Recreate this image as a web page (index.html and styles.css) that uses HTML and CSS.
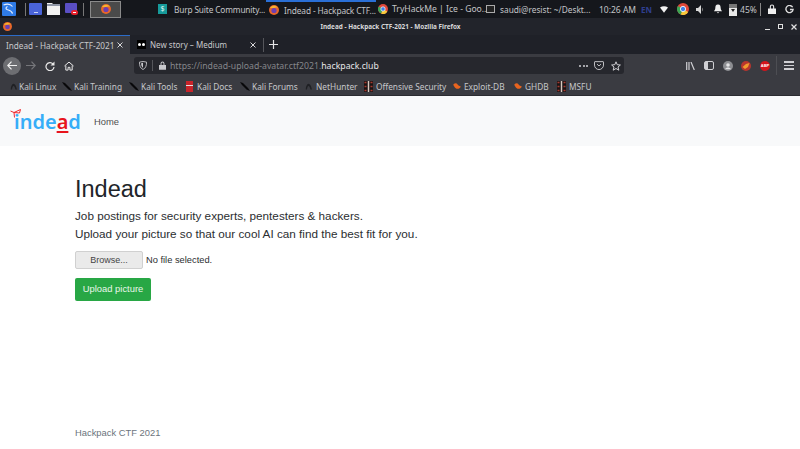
FILE: index.html
```html
<!DOCTYPE html>
<html lang="en">
<head>
  <meta charset="UTF-8" />
  <title>Indead - Hackpack CTF-2021</title>
  <link rel="stylesheet" href="styles.css">
</head>
<body>
  <svg class="defs" width="0" height="0">
    <symbol id="firefox" viewBox="0 0 10 10">
      <circle cx="5" cy="5" r="5" fill="#e8672a"/>
      <circle cx="5" cy="5.5" r="2.6" fill="#6d3fb0"/>
      <path d="M1 3c2-3 6-3 8 0-2-1-3 0-4 0z" fill="#f6b52d"/>
    </symbol>
    <symbol id="chrome" viewBox="0 0 10 10">
      <circle cx="5" cy="5" r="5" fill="#e0483a"/>
      <path d="M5 5 9.3 7.5A5 5 0 0 1 3 9.6z" fill="#f7c93a"/>
      <path d="M5 5 3 9.6A5 5 0 0 1 .7 2.5z" fill="#3aa655"/>
      <circle cx="5" cy="5" r="2.2" fill="#3f7fe8" stroke="#fff" stroke-width=".7"/>
    </symbol>
    <symbol id="dragon" viewBox="0 0 10 9">
      <path d="M0 0 3 1 8 6 10 9 6.500 7.500 2 3z" fill="#08080a"/>
    </symbol>
    <symbol id="hunter" viewBox="0 0 9 9">
      <path d="M1 8.500C1 5 2.500 1 4.500 1S8 4 9 8.500H7C6.500 6 5.500 4 4.500 4S3 6 2.500 8.500z" fill="#1f2024"/>
    </symbol>
    <symbol id="offsec" viewBox="0 0 9 11">
      <rect width="9" height="11" fill="#1b1414"/>
      <path d="M4.500 0v11" stroke="#d9c9c0" stroke-width="1.500"/>
      <path d="M.5 1.500h2M6.500 1.500h2M.5 5.500h2M6.500 5.500h2M.5 9.500h2M6.500 9.500h2" stroke="#a8392f" stroke-width="1.500"/>
    </symbol>
    <symbol id="flame" viewBox="0 0 9 7">
      <path d="M0 2C2 0 4 0 5 1.500S8 4 9 4C8 6.500 5 7.500 3 6S1 3 0 2z" fill="#e8641f"/>
    </symbol>
  </svg>

  <div class="panel">
    <svg class="kali-menu" width="14" height="14" viewBox="0 0 14 14">
      <rect width="14" height="14" rx="1" fill="#2f7be6"/>
      <path d="M1.500 3c3.500-1.500 7-1 9 1.500M5.500 4.500c-2 1-2 2.500 0 3.200 2.500.8 4.500 1 5 4" fill="none" stroke="#e8eefb" stroke-width="1.200"/>
    </svg>
    <span class="sep sep-a"></span>
    <svg class="launcher" width="13" height="12" viewBox="0 0 13 12">
      <rect width="13" height="12" rx="1" fill="#4a64d8"/>
      <rect x="5" y="9" width="4" height="1" fill="#cdd6f5"/>
    </svg>
    <svg class="launcher" width="13" height="12" viewBox="0 0 13 12">
      <path d="M0 1V0h5l1 1h7v11H0z" fill="#f1f1f1"/>
      <rect y="1" width="13" height="2" fill="#8f96a6"/>
    </svg>
    <svg class="launcher launcher-last" width="13" height="12" viewBox="0 0 13 12">
      <rect width="12" height="10" rx="1" fill="#5a4fc4"/>
      <rect x="6" y="7" width="7" height="5" rx="2.500" fill="#e8202c"/>
      <rect x="8" y="9" width="3" height="1" fill="#fff"/>
    </svg>
    <span class="sep sep-b"></span>
    <div class="active-win">
      <svg width="10" height="10"><use href="#firefox"/></svg>
    </div>
    <div class="task task-burp">
      <span class="burp-icon">$</span>
      <span class="task-label">Burp Suite Community...</span>
    </div>
    <div class="task task-ff">
      <svg width="10" height="10"><use href="#firefox"/></svg>
      <span class="task-label">Indead - Hackpack CTF...</span>
    </div>
    <div class="task task-chrome">
      <svg width="10" height="10"><use href="#chrome"/></svg>
      <span class="task-label">TryHackMe | Ice - Goo...</span>
    </div>
    <div class="task task-term">
      <span class="term-icon"></span>
      <span class="task-label">saudi@resist: ~/Deskt...</span>
    </div>
    <span class="clock">10:26 AM</span>
    <span class="lang">EN</span>
    <svg class="tray-wifi" width="8" height="7" viewBox="0 0 10 8"><path d="M0 1.500C3-.5 7-.5 10 1.500L5 8z" fill="#f2f2f2"/></svg>
    <svg class="tray-chrome" width="12" height="12"><use href="#chrome"/></svg>
    <svg class="tray-vol" width="9" height="9" viewBox="0 0 9 9"><path d="M0 3h2l3-3v9L2 6H0z" fill="#d8d8d8"/><path d="M6 2.500c1.500 1 1.500 3 0 4z" fill="#777"/></svg>
    <svg class="tray-bell" width="8" height="10" viewBox="0 0 9 10"><path d="M4.500 0C7 0 7.500 2 7.500 4c0 2 1.500 3.500 1.500 3.500H0S1.500 6 1.500 4c0-2 .5-4 3-4zM3.500 8.500h2l-1 1.500z" fill="#efefef"/></svg>
    <svg class="tray-batt" width="8" height="13" viewBox="0 0 8 13"><rect y="1" width="8" height="12" fill="#e8e8e8"/><rect y="1" width="8" height="4" fill="#777"/><path d="M2 6h4L4 9z" fill="#222"/></svg>
    <span class="batt-pct">45%</span>
    <span class="sep sep-c"></span>
    <svg class="tray-lock" width="8" height="10" viewBox="0 0 9 11"><path d="M2 5V3a2.500 2.500 0 0 1 5 0v2h2v6H0V5zM3.200 5h2.600V3a1.300 1.300 0 0 0-2.600 0z" fill="#efefef"/></svg>
    <svg class="tray-power" width="9" height="9" viewBox="0 0 10 10"><path d="M8.500 2.500A4 4 0 1 0 9 5H5.500" fill="none" stroke="#dcdcdc" stroke-width="1.500"/></svg>
  </div>

  <div class="titlebar">
    <svg class="title-icon" width="9" height="9"><use href="#firefox"/></svg>
    <span class="title-text">Indead - Hackpack CTF-2021 - Mozilla Firefox</span>
    <div class="win-btns">
      <span class="win-min"></span>
      <span class="win-max"></span>
      <svg width="6" height="6" viewBox="0 0 6 6"><path d="M.5.5l5 5M5.500.5l-5 5" stroke="#e0e0e0" stroke-width="1.200"/></svg>
    </div>
  </div>

  <div class="tabstrip">
    <div class="tab tab-active">
      <span class="tab-label">Indead - Hackpack CTF-2021</span>
      <svg class="tab-x" width="6" height="6" viewBox="0 0 6 6"><path d="M.5.5l5 5M5.500.5l-5 5" stroke="#d8d8da" stroke-width="1"/></svg>
    </div>
    <div class="tab tab-idle">
      <span class="medium-icon"><i></i><i></i></span>
      <span class="tab-label">New story – Medium</span>
      <svg class="tab-x" width="6" height="6" viewBox="0 0 6 6"><path d="M.5.5l5 5M5.500.5l-5 5" stroke="#d8d8da" stroke-width="1"/></svg>
    </div>
    <span class="tab-sep"></span>
    <svg class="tab-new" width="9" height="9" viewBox="0 0 9 9"><path d="M4.500 0v9M0 4.500h9" stroke="#e4e4e6" stroke-width="1.200"/></svg>
  </div>

  <div class="toolbar">
    <span class="nav-back">
      <svg width="10" height="9" viewBox="0 0 10 9"><path d="M4.500.7.800 4.500 4.500 8.300M1 4.500h9" fill="none" stroke="#f0f0f0" stroke-width="1.200"/></svg>
    </span>
    <svg class="nav-fwd" width="10" height="9" viewBox="0 0 10 9"><path d="M5.500.7 9.200 4.500 5.500 8.300M9 4.500H0" fill="none" stroke="#75767a" stroke-width="1.200"/></svg>
    <svg class="nav-reload" width="10" height="10" viewBox="0 0 10 10"><path d="M8 3A4 4 0 1 0 9 6" fill="none" stroke="#e8e8e8" stroke-width="1.200"/><path d="M9.500.5v4h-4z" fill="#e8e8e8"/></svg>
    <svg class="nav-home" width="10" height="10" viewBox="0 0 11 10"><path d="M.5 5 5.500.7 10.500 5M2 4.500V9.500h2.500V6.500h2V9.500H9V4.500" fill="none" stroke="#e8e8e8" stroke-width="1.100"/></svg>
    <div class="urlbar">
      <svg class="url-shield" width="8" height="9" viewBox="0 0 9 10"><path d="M.5 1.200 4.500.5l4 .7c0 4-1 7-4 8.300-3-1.300-4-4.300-4-8.300z" fill="none" stroke="#c8c8cc"/><path d="M4.500 2v5.500C3 6.700 2.500 5 2.400 2.500z" fill="#c8c8cc"/></svg>
      <span class="url-div"></span>
      <svg class="url-lock" width="7" height="9" viewBox="0 0 9 11"><path d="M2 5V3a2.500 2.500 0 0 1 5 0v2h2v6H0V5zM3.200 5h2.600V3a1.300 1.300 0 0 0-2.600 0z" fill="#c8c8cc"/></svg>
      <span class="url-text">https://indead-upload-avatar.ctf2021.<span class="url-host">hackpack.club</span></span>
      <span class="url-dots"><i></i><i></i><i></i></span>
      <svg class="url-pocket" width="10" height="9" viewBox="0 0 11 10"><path d="M1 .7h9a.5.5 0 0 1 .5.500V4.500a5 5 0 0 1-10 0V1.200A.5.5 0 0 1 1 .7z" fill="none" stroke="#d0d0d4"/><path d="M3.300 3.500 5.500 5.500 7.700 3.500" fill="none" stroke="#d0d0d4"/></svg>
      <svg class="url-star" width="10" height="10" viewBox="0 0 10 10"><path d="M5 .8 6.200 3.700 9.400 4 7 6 7.800 9.200 5 7.500 2.200 9.200 3 6 .6 4 3.800 3.700z" fill="none" stroke="#d0d0d4"/></svg>
    </div>
    <svg class="tb-lib" width="9" height="8" viewBox="0 0 9 8"><path d="M.7 0v8M3 0v8M5 0l3.300 8" fill="none" stroke="#cfcfd3" stroke-width="1.200"/></svg>
    <svg class="tb-side" width="10" height="9" viewBox="0 0 10 9"><rect x=".5" y=".5" width="9" height="8" rx="1.500" fill="none" stroke="#cfcfd3"/><rect x="1" y="1" width="3" height="7" fill="#cfcfd3"/></svg>
    <svg class="tb-acct" width="10" height="10" viewBox="0 0 10 10"><circle cx="5" cy="5" r="5" fill="#8d8e92"/><circle cx="5" cy="4" r="1.800" fill="#e4e4e6"/><path d="M2 8.200c1-2.200 5-2.200 6 0z" fill="#e4e4e6"/></svg>
    <svg class="tb-ext" width="10" height="10" viewBox="0 0 10 10"><circle cx="5" cy="5" r="5" fill="#b8352e"/><path d="M1.500 6 5 3l3.500-1L7 6 4 8z" fill="#f09a2e"/></svg>
    <span class="tb-abp">ABP</span>
    <span class="tb-sep"></span>
    <span class="tb-menu"><i></i><i></i><i></i></span>
  </div>

  <div class="bookmarks">
    <span class="bm bm-linux"><svg width="7" height="7"><use href="#hunter"/></svg>Kali Linux</span>
    <span class="bm bm-training"><svg width="10" height="9"><use href="#dragon"/></svg>Kali Training</span>
    <span class="bm bm-tools"><svg width="10" height="9"><use href="#dragon"/></svg>Kali Tools</span>
    <span class="bm bm-docs"><span class="bm-doc"></span>Kali Docs</span>
    <span class="bm bm-forums"><svg width="10" height="9"><use href="#dragon"/></svg>Kali Forums</span>
    <span class="bm bm-hunter"><svg width="7" height="7"><use href="#hunter"/></svg>NetHunter</span>
    <span class="bm bm-offsec"><svg width="9" height="11"><use href="#offsec"/></svg>Offensive Security</span>
    <span class="bm bm-edb"><svg width="8" height="6"><use href="#flame"/></svg>Exploit-DB</span>
    <span class="bm bm-ghdb"><svg width="8" height="6"><use href="#flame"/></svg>GHDB</span>
    <span class="bm bm-msfu"><svg width="9" height="11"><use href="#offsec"/></svg>MSFU</span>
  </div>

  <nav class="site-nav">
    <div class="logo">
      <svg class="logo-mark" width="12" height="10" viewBox="0 0 12 10"><path d="M.5 2 4 3.500 10.500.5 9.500 4 4 3.500 4.500 8.500" fill="none" stroke="#f0282d"/></svg>
      <span class="logo-text">inde<span class="logo-a">a</span>d</span>
    </div>
    <span class="nav-link">Home</span>
  </nav>

  <main class="content">
    <h1>Indead</h1>
    <p class="lead">Job postings for security experts, pentesters &amp; hackers.</p>
    <p class="lead">Upload your picture so that our cool AI can find the best fit for you.</p>
    <div class="file-row">
      <span class="browse">Browse...</span>
      <span class="file-name">No file selected.</span>
    </div>
    <span class="upload-btn">Upload picture</span>
  </main>

  <footer class="site-foot">Hackpack CTF 2021</footer>
</body>
</html>
```

FILE: styles.css
```css
* {
  box-sizing: border-box;
}

body {
  margin: 0;
  display: flex;
  flex-direction: column;
  height: 449px;
  overflow: hidden;
  background: #fff;
  font-family: "Liberation Sans", Arial, sans-serif;
  color: #212529;
}

svg {
  display: block;
  flex: none;
}

.defs {
  position: absolute;
}

/* desktop panel */
.panel {
  display: flex;
  align-items: center;
  flex: none;
  height: 18px;
  background: #15171c;
  color: #c4c5c8;
  font-family: "Noto Sans", sans-serif;
  font-size: 8.5px;
  white-space: nowrap;
}

.kali-menu { margin-left: 2px; }
.sep { width: 1px; height: 13px; background: #777; flex: none; }
.sep-a { margin: 0 3px 0 9px; }
.sep-b { margin: 0 6px 0 5px; }
.sep-c { margin: 0 7px 0 3px; background: #888; }
.launcher { margin-right: 5px; }
.launcher-last { margin-right: 0; }

.active-win {
  display: flex;
  align-items: center;
  justify-content: center;
  width: 31px;
  height: 17px;
  background: #4a4a4a;
  border: 1px solid #8a8a8a;
}

.task {
  display: flex;
  align-items: center;
  gap: 4px;
  flex: none;
  height: 18px;
}

.task-burp { width: 108px; margin-left: 37px; gap: 7px; font-size: 8.3px; letter-spacing: -.15px; }
.task-ff { width: 110px; padding-left: 3px; gap: 5px; border-top: 2px solid #2a6fd6; font-size: 8.3px; letter-spacing: -.1px; }
.task-chrome { width: 110px; padding-left: 2px; font-size: 8.6px; }
.task-term { width: 113px; gap: 5px; font-size: 8.3px; }

.burp-icon {
  flex: none;
  width: 9px;
  height: 10px;
  background: #169a9a;
  color: #e8f5f5;
  font-size: 7px;
  line-height: 10px;
  text-align: center;
}

.term-icon {
  flex: none;
  width: 9px;
  height: 8px;
  background: #222;
  border: 1px solid #aaa;
}

.clock { margin-left: 0; }
.lang { margin-left: 5px; color: #2f3f8f; font-size: 8px; font-weight: 700; }
.tray-wifi { margin-left: 8px; }
.tray-chrome { margin-left: 9px; }
.tray-vol { margin-left: 7px; }
.tray-bell { margin-left: 9px; }
.tray-batt { margin-left: 7px; }
.batt-pct { margin-left: 3px; }
.tray-power { margin-left: 9px; }

/* window title */
.titlebar {
  display: flex;
  align-items: center;
  flex: none;
  height: 17px;
  padding: 0 3px;
  background: #22242b;
}

.title-text {
  flex: 1;
  padding-left: 4px;
  text-align: center;
  color: #d8d8da;
  font-family: "Noto Sans", sans-serif;
  font-size: 6.4px;
  font-weight: 700;
}

.win-btns {
  display: flex;
  align-items: center;
  gap: 8px;
  width: 32px;
}

.win-min { width: 5px; height: 1px; margin-top: 5px; background: #e0e0e0; }
.win-max { width: 5px; height: 5px; border: 1px solid #e0e0e0; }

/* tabs */
.tabstrip {
  display: flex;
  align-items: stretch;
  flex: none;
  height: 19px;
  background: #1f2128;
  color: #c8c9cc;
  font-family: "Noto Sans", sans-serif;
  font-size: 8.2px;
  white-space: nowrap;
}

.tab {
  display: flex;
  align-items: center;
  flex: none;
}

.tab-active {
  justify-content: space-between;
  width: 130px;
  padding: 0 7px 0 6px;
  background: #3a3b41;
  border-top: 1px solid #2c6cc8;
}

.tab-idle {
  width: 133px;
  padding: 0 7px;
  font-size: 8px;
}

.tab-idle .tab-x { margin-left: auto; }

.medium-icon {
  display: flex;
  align-items: center;
  justify-content: center;
  gap: 1px;
  width: 9px;
  height: 9px;
  margin-right: 4px;
  background: #000;
}

.medium-icon i {
  width: 3px;
  height: 3px;
  border-radius: 50%;
  background: #fff;
}

.tab-sep { width: 1px; height: 14px; margin-top: 3px; background: #55565b; }
.tab-new { margin: 5px 0 0 5px; }

/* nav toolbar */
.toolbar {
  display: flex;
  align-items: center;
  flex: none;
  height: 23px;
  background: #3a3b41;
}

.nav-back {
  display: flex;
  align-items: center;
  justify-content: center;
  width: 18px;
  height: 18px;
  margin-left: 3px;
  border-radius: 50%;
  background: #6d6e72;
}

.nav-fwd { margin-left: 5px; }
.nav-reload { margin-left: 9px; }
.nav-home { margin-left: 9px; }

.urlbar {
  display: flex;
  align-items: center;
  flex: none;
  width: 490px;
  height: 17px;
  margin-left: 60px;
  padding: 0 3px 0 5px;
  background: #26272d;
  border-radius: 3px;
  white-space: nowrap;
}

.url-div { width: 1px; height: 11px; margin-left: 5px; background: #55565b; }
.url-lock { margin-left: 6px; }

.url-text {
  margin-left: 4px;
  color: #85868b;
  font-family: "Noto Sans", sans-serif;
  font-size: 8.7px;
}

.url-host { color: #e6e6e8; }

.url-dots {
  display: flex;
  gap: 1.5px;
  margin-left: auto;
}

.url-dots i {
  width: 2px;
  height: 2px;
  border-radius: 50%;
  background: #d0d0d4;
}

.url-pocket { margin-left: 6px; }
.url-star { margin-left: 7px; }

.tb-lib { margin-left: 62px; }
.tb-side { margin-left: 9px; }
.tb-acct { margin-left: 9px; }
.tb-ext { margin-left: 8px; }

.tb-abp {
  flex: none;
  width: 10px;
  height: 10px;
  margin-left: 9px;
  border-radius: 50%;
  background: #d5141c;
  color: #fff;
  font-size: 4px;
  font-weight: 700;
  line-height: 10px;
  text-align: center;
}

.tb-sep { width: 1px; height: 19px; margin-left: 6px; background: #4d4e53; }

.tb-menu {
  display: flex;
  flex-direction: column;
  gap: 2px;
  margin-left: 7px;
}

.tb-menu i {
  width: 10px;
  height: 1.5px;
  background: #cfcfd3;
}

/* bookmarks */
.bookmarks {
  display: flex;
  align-items: center;
  flex: none;
  height: 19px;
  padding-left: 10px;
  background: #3a3b41;
  border-bottom: 1px solid #2b2c31;
  color: #c6c7ca;
  font-family: "Noto Sans", sans-serif;
  font-size: 8.3px;
  white-space: nowrap;
}

.bm {
  display: flex;
  align-items: center;
  gap: 2px;
  flex: none;
}

.bm-linux { width: 52px; }
.bm-training { width: 67px; }
.bm-tools { width: 57px; }
.bm-docs { width: 54px; gap: 4px; }
.bm-forums { width: 65px; }
.bm-hunter { width: 59px; gap: 4px; }
.bm-offsec { width: 89px; gap: 3px; }
.bm-edb { width: 61px; gap: 3px; }
.bm-ghdb { width: 43px; gap: 3px; }
.bm-msfu { gap: 3px; }

.bm-doc {
  width: 7px;
  height: 11px;
  background: linear-gradient(#c8242a 35%, #e8e0e0 35%, #e8e0e0 50%, #c8242a 50%);
}

/* page */
.site-nav {
  display: flex;
  align-items: center;
  flex: none;
  height: 50px;
  padding-left: 10px;
  background: #f8f9fa;
}

.logo {
  position: relative;
  width: 84px;
  height: 25px;
}

.logo-mark {
  position: absolute;
  left: 0;
  top: 0;
}

.logo-text {
  position: absolute;
  left: 4px;
  top: -1px;
  color: #36aef8;
  font-family: "Noto Sans", sans-serif;
  font-size: 20px;
  font-weight: 600;
  line-height: 28px;
}

.logo-a {
  color: #e8141c;
  text-decoration: underline;
  text-decoration-thickness: 2px;
  text-underline-offset: 2px;
}

.nav-link {
  color: #4e4f50;
  font-size: 9.4px;
}

.content {
  display: flex;
  flex-direction: column;
  align-items: flex-start;
  flex: 1;
  padding: 29px 0 0 75px;
}

h1 {
  margin: 0 0 4px;
  font-size: 23.5px;
  font-weight: 400;
  line-height: 28px;
}

.lead {
  margin: 0;
  font-size: 11.73px;
  line-height: 18px;
  color: #2b2e31;
}

.file-row {
  display: flex;
  align-items: center;
  margin-top: 8px;
}

.browse {
  width: 68px;
  height: 18px;
  background: #eaeaea;
  border: 1px solid #d0d0d0;
  border-radius: 2px;
  color: #444;
  font-size: 9px;
  line-height: 16px;
  text-align: center;
}

.file-name {
  margin-left: 3px;
  font-size: 9.3px;
  color: #2b2e31;
}

.upload-btn {
  width: 76px;
  height: 23px;
  margin-top: 9px;
  background: #28a745;
  border-radius: 2px;
  color: #e8f6ea;
  font-size: 9.38px;
  line-height: 23px;
  text-align: center;
}

.site-foot {
  flex: none;
  padding: 0 0 10px 75px;
  color: #6c757d;
  font-size: 9.4px;
  line-height: 12px;
}
```
